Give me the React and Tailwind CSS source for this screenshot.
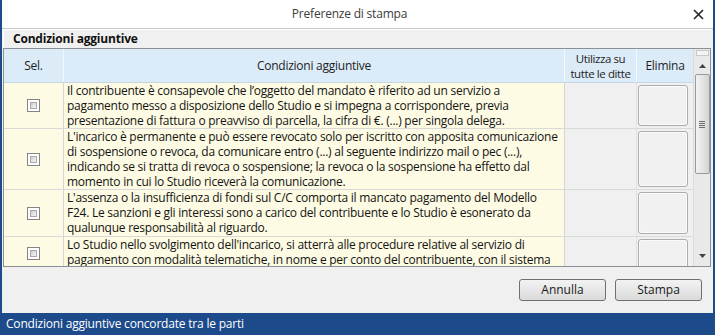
import React from 'react';

const rows = [
  {
    h: 'h-[46px]',
    check: 'items-center',
    text: "Il contribuente è consapevole che l’oggetto del mandato è riferito ad un servizio a pagamento messo a disposizione dello Studio e si impegna a corrispondere, previa presentazione di fattura o preavviso di parcella, la cifra di €. (...) per singola delega.",
  },
  {
    h: 'h-[61px]',
    check: 'items-center',
    text: "L'incarico è permanente e può essere revocato solo per iscritto con apposita comunicazione di sospensione o revoca, da comunicare entro (...) al seguente indirizzo mail o pec (...), indicando se si tratta di revoca o sospensione; la revoca o la sospensione ha effetto dal momento in cui lo Studio riceverà la comunicazione.",
  },
  {
    h: 'h-[47px]',
    check: 'items-center',
    text: "L'assenza o la insufficienza di fondi sul C/C comporta il mancato pagamento del Modello F24. Le sanzioni e gli interessi sono a carico del contribuente e lo Studio è esonerato da qualunque responsabilità al riguardo.",
  },
  {
    h: 'h-[61px]',
    check: 'items-start pt-[10px]',
    text: "Lo Studio nello svolgimento dell'incarico, si atterrà alle procedure relative al servizio di pagamento con modalità telematiche, in nome e per conto del contribuente, con il sistema di addebito diretto sul conto corrente indicato nella delega.",
  },
];

function CheckBox() {
  return (
    <div className="w-[13px] h-[13px] border border-[#858585] bg-white p-[2px]">
      <div className="w-full h-full border border-[#a9a9a9] bg-gradient-to-br from-[#cfcfcf] to-[#f6f6f6]" />
    </div>
  );
}

function Row({ row }) {
  return (
    <div className={`flex ${row.h} shrink-0 border-b border-[#d9d9d9]`}>
      <div className={`w-[60px] shrink-0 bg-[#fdfbe3] border-r border-[#d4d4d4] flex justify-center ${row.check}`}>
        <CheckBox />
      </div>
      <div className="w-[501px] shrink-0 bg-[#fdfbe3] border-r border-[#d4d4d4] pl-[3px] pr-[4px] leading-[15px] text-[12px] tracking-[-0.25px] text-[#141414] overflow-hidden">
        {row.text}
      </div>
      <div className="w-[72px] shrink-0 bg-[#f0f0f0] border-r border-[#e2e2e2]" />
      <div className="w-[56px] shrink-0 bg-[#f0f0f0] pl-[1px] pr-[5px] py-[2px]">
        <div className="w-full h-full rounded-[3px] border border-[#acacac] bg-[#f1f1f1] shadow-[inset_0_0_0_1px_#fbfbfb]" />
      </div>
    </div>
  );
}

function ScrollBar() {
  return (
    <div className="w-[17px] shrink-0 bg-[#e9e9e9] border-l border-[#dcdcdc] flex flex-col items-center">
      <div className="mt-[1px] w-[13px] h-[6px] border border-[#c8c8c8] bg-[#f4f4f4]" />
      <div className="h-[16px] flex items-center justify-center mt-[2px]">
        <svg width="7" height="4" viewBox="0 0 7 4"><path d="M0 4 L3.5 0 L7 4 Z" fill="#444" /></svg>
      </div>
      <div className="w-[15px] h-[100px] rounded-[2px] border border-[#9a9a9a] bg-gradient-to-r from-[#f3f3f3] via-[#e4e4e4] to-[#d4d4d4] flex items-center justify-center">
        <div className="flex flex-col gap-[1px]">
          <div className="w-[6px] h-[1px] bg-[#6d6d6d]" />
          <div className="w-[6px] h-[1px] bg-[#6d6d6d]" />
          <div className="w-[6px] h-[1px] bg-[#6d6d6d]" />
          <div className="w-[6px] h-[1px] bg-[#6d6d6d]" />
        </div>
      </div>
      <div className="flex-1" />
      <div className="h-[16px] flex items-center justify-center mb-[2px]">
        <svg width="7" height="4" viewBox="0 0 7 4"><path d="M0 0 L3.5 4 L7 0 Z" fill="#444" /></svg>
      </div>
    </div>
  );
}

export default function App() {
  return (
    <div
      className="w-[715px] h-[335px] bg-[#1c4a8a] flex flex-col overflow-hidden"
      style={{ fontFamily: '"Segoe UI", "Open Sans", "Noto Sans", sans-serif' }}
    >
      <div className="mx-[2px] flex-1 min-h-0 bg-[#f0f0f0] flex flex-col">
        {/* title bar */}
        <div className="h-[29px] shrink-0 bg-white border-b border-[#c9c9c9] flex items-center relative">
          <div className="flex-1 text-center text-[12px] tracking-[-0.2px] text-[#3c3c3c] pr-[16px]">Preferenze di stampa</div>
          <div className="absolute right-[9px] top-[9px]">
            <svg width="11" height="11" viewBox="0 0 11 11">
              <path d="M1 1 L10 10 M10 1 L1 10" stroke="#2b2b2b" strokeWidth="1.7" />
            </svg>
          </div>
        </div>

        {/* group */}
        <div className="px-[1px] flex flex-col">
          <div className="h-[19px] pl-[9px] flex items-center text-[12px] tracking-[-0.2px] font-bold text-[#111] border-t border-l border-white">
            Condizioni aggiuntive
          </div>

          {/* grid */}
          <div className="w-[708px] h-[219px] border border-[#8b8f96] flex bg-white">
            <div className="flex flex-col w-[689px] shrink-0">
              <div className="h-[34px] shrink-0 flex bg-[#dcebf8] border-b border-[#c5d6e6] text-[12px] tracking-[-0.25px] text-[#1e1e1e]">
                <div className="w-[60px] shrink-0 border-r border-[#f2f7fc] flex items-center justify-center">Sel.</div>
                <div className="w-[501px] shrink-0 border-r border-[#f2f7fc] flex items-center justify-center">Condizioni aggiuntive</div>
                <div className="w-[72px] shrink-0 border-r border-[#f2f7fc] flex flex-col items-center justify-center text-center text-[11.5px] tracking-[-0.4px] leading-[15px] overflow-hidden">
                  <span className="whitespace-nowrap">Utilizza su</span>
                  <span className="whitespace-nowrap">tutte le ditte</span>
                </div>
                <div className="w-[56px] shrink-0 flex items-center justify-center">Elimina</div>
              </div>
              <div className="flex-1 min-h-0 overflow-hidden flex flex-col bg-[#f0f0f0]">
                {rows.map((r, i) => (
                  <Row key={i} row={r} />
                ))}
              </div>
            </div>
            <ScrollBar />
          </div>
        </div>

        {/* buttons */}
        <div className="flex-1 flex items-start justify-end gap-[9px] pt-[12px] pr-[11px]">
          <button className="w-[87px] h-[22px] rounded-[3px] border border-[#707070] bg-gradient-to-b from-[#f3f3f3] to-[#dadada] text-[12px] text-[#1a1a1a]">
            Annulla
          </button>
          <button className="w-[87px] h-[22px] rounded-[3px] border border-[#707070] bg-gradient-to-b from-[#f3f3f3] to-[#dadada] text-[12px] text-[#1a1a1a]">
            Stampa
          </button>
        </div>
      </div>

      {/* status bar */}
      <div className="h-[22px] shrink-0 flex items-center pl-[6px] text-[12px] tracking-[-0.2px] text-white">
        Condizioni aggiuntive concordate tra le parti
      </div>
    </div>
  );
}
